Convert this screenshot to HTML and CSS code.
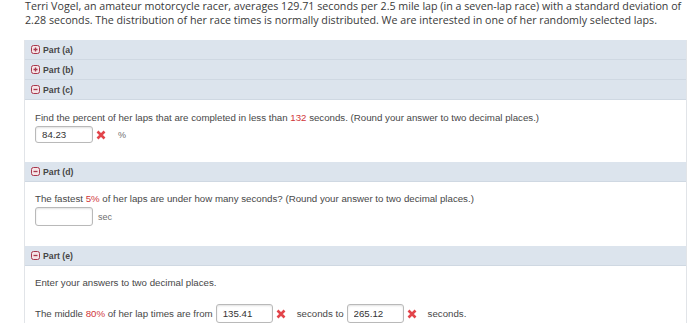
FILE: index.html
```html
<!DOCTYPE html>
<html lang="en">
<head>
  <meta charset="UTF-8" />
  <title>Question</title>
  <link rel="stylesheet" href="styles.css">
</head>
<body>

  <div class="question">
    <p class="intro">Terri Vogel, an amateur motorcycle racer, averages 129.71 seconds per 2.5 mile lap (in a seven-lap race) with a standard deviation of 2.28 seconds. The distribution of her race times is normally distributed. We are interested in one of her randomly selected laps.</p>

    <div class="parts">
      <div class="part-head">
        <svg class="toggle" viewBox="0 0 9 9"><rect x="0.5" y="0.5" width="8" height="8" rx="2"/><path d="M2.5 4.5h4M4.5 2.5v4"/></svg>
        Part (a)
      </div>
      <div class="part-head">
        <svg class="toggle" viewBox="0 0 9 9"><rect x="0.5" y="0.5" width="8" height="8" rx="2"/><path d="M2.5 4.5h4M4.5 2.5v4"/></svg>
        Part (b)
      </div>
      <div class="part-head">
        <svg class="toggle" viewBox="0 0 9 9"><rect x="0.5" y="0.5" width="8" height="8" rx="2"/><path d="M2.5 4.5h4"/></svg>
        Part (c)
      </div>
      <div class="part-body body-c">
        <p>Find the percent of her laps that are completed in less than <span class="hl">132</span> seconds. (Round your answer to two decimal places.)</p>
        <div class="answer">
          <input type="text" class="field" value="84.23">
          <svg class="wrong" viewBox="0 0 10 10"><path d="M1.5 1.5l7 7M8.5 1.5l-7 7"/></svg>
          <span class="unit pct">%</span>
        </div>
      </div>

      <div class="part-head">
        <svg class="toggle" viewBox="0 0 9 9"><rect x="0.5" y="0.5" width="8" height="8" rx="2"/><path d="M2.5 4.5h4"/></svg>
        Part (d)
      </div>
      <div class="part-body body-d">
        <p>The fastest <span class="hl">5%</span> of her laps are under how many seconds? (Round your answer to two decimal places.)</p>
        <div class="answer">
          <input type="text" class="field tall" value="">
          <span class="unit">sec</span>
        </div>
      </div>

      <div class="part-head">
        <svg class="toggle" viewBox="0 0 9 9"><rect x="0.5" y="0.5" width="8" height="8" rx="2"/><path d="M2.5 4.5h4"/></svg>
        Part (e)
      </div>
      <div class="part-body body-e">
        <p>Enter your answers to two decimal places.</p>
        <div class="answer range">
          <span class="text">The middle <span class="hl">80%</span> of her lap times are from</span>
          <input type="text" class="field tall" value="135.41">
          <svg class="wrong" viewBox="0 0 10 10"><path d="M1.5 1.5l7 7M8.5 1.5l-7 7"/></svg>
          <span class="text gap">seconds to</span>
          <input type="text" class="field tall" value="265.12">
          <svg class="wrong" viewBox="0 0 10 10"><path d="M1.5 1.5l7 7M8.5 1.5l-7 7"/></svg>
          <span class="text gap">seconds.</span>
        </div>
      </div>
    </div>
  </div>

</body>
</html>
```

FILE: styles.css
```css
* { box-sizing: border-box; }

body {
  margin: 0;
  background: #fff;
  font-family: "Liberation Sans", Arial, sans-serif;
  color: #444;
}

.question {
  margin-left: 24px;
  width: 663px;
}

.intro {
  margin: -1px 0 13px 1px;
  font-family: "Open Sans", sans-serif;
  font-size: 10.7px;
  line-height: 14px;
  color: #3a3a3a;
}

.parts {
  border-left: 1px solid #e1e4e8;
  border-right: 1px solid #e1e4e8;
}

.part-head {
  display: flex;
  align-items: center;
  gap: 3px;
  height: 20px;
  padding-left: 6px;
  background: #dce4ed;
  border-bottom: 1px solid #cfd8e2;
  font-size: 8.7px;
  font-weight: bold;
  color: #464646;
}

.toggle {
  width: 9px;
  height: 9px;
}

.toggle rect {
  fill: #f5e3e6;
  stroke: #a8374c;
  stroke-width: 1;
}

.toggle path {
  stroke: #a8374c;
  stroke-width: 1.3;
  fill: none;
}

.part-body {
  padding: 12px 10px 19px;
  font-size: 9.7px;
  color: #474747;
}

.part-body p {
  margin: 0;
  line-height: 12px;
}

.body-d {
  padding: 11px 10px 20px;
}

.body-e {
  padding: 11px 10px 0;
}

.hl {
  color: #d0363a;
}

.answer {
  display: flex;
  align-items: center;
  margin-top: 2px;
}

.range {
  margin-top: 15px;
}

.field {
  width: 58px;
  height: 17px;
  padding: 0 6px;
  border: 1px solid #b9b9b9;
  border-radius: 3px;
  box-shadow: inset 0 1px 2px rgba(0, 0, 0, 0.12);
  font-family: "Liberation Sans", Arial, sans-serif;
  font-size: 9.7px;
  color: #333;
  background: #fff;
}

.field.tall {
  height: 19px;
}

.range .field {
  margin-left: 3px;
  width: 57px;
}

.wrong {
  width: 10px;
  height: 10px;
  margin-left: 3px;
}

.wrong path {
  stroke: #e2444a;
  stroke-width: 2.6;
  fill: none;
}

.unit {
  margin-left: 5px;
  color: #6e6e6e;
  font-size: 9px;
}

.pct {
  margin-left: 12px;
}

.gap {
  margin-left: 11px;
}
```
